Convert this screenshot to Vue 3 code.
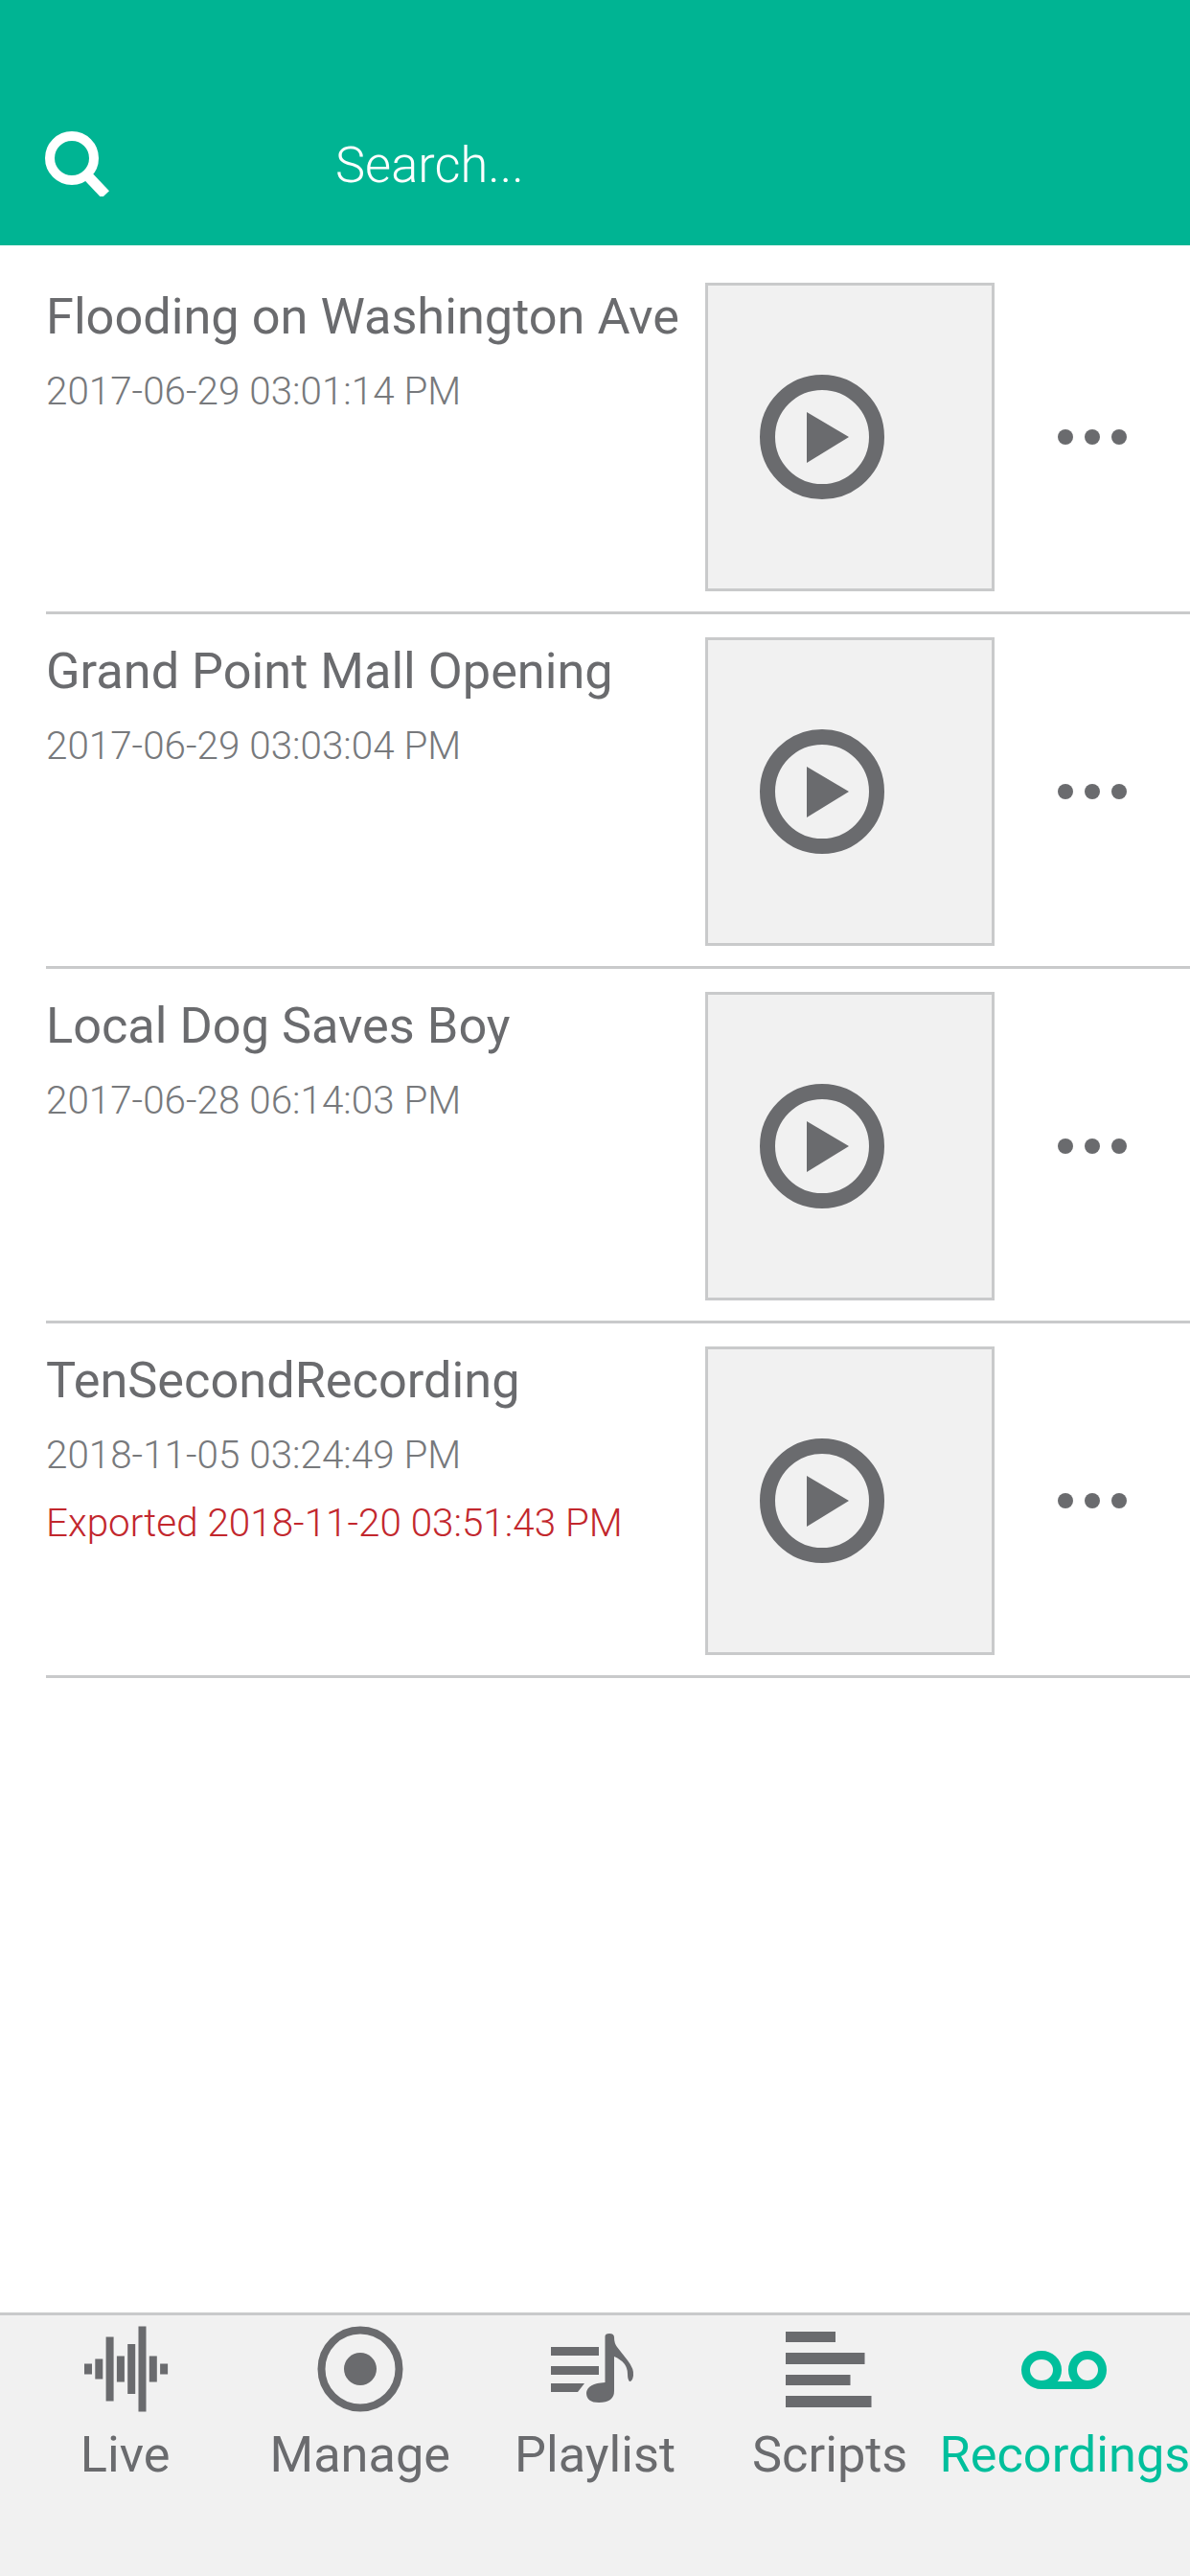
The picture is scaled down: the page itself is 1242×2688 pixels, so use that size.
<template>
  <div class="page">
    <header class="search-bar">
      <svg class="search-icon" width="70" height="68" viewBox="0 0 70 68">
        <circle cx="29" cy="28" r="23" fill="none" stroke="#fff" stroke-width="10" />
        <path d="M46 47 L64 66" fill="none" stroke="#fff" stroke-width="11" />
      </svg>
      <span class="search-text">Search...</span>
    </header>

    <main class="list">
      <div class="row" v-for="rec in recordings" :key="rec.title">
        <div class="info">
          <div class="title">{{ rec.title }}</div>
          <div class="date">{{ rec.date }}</div>
          <div class="exported" v-if="rec.exported">Exported {{ rec.exported }}</div>
        </div>
        <div class="thumb">
          <svg width="130" height="130" viewBox="0 0 130 130">
            <circle cx="65" cy="65" r="57" fill="none" stroke="#6a6b6e" stroke-width="16" />
            <path d="M49 39 L93 65 L49 92 Z" fill="#6a6b6e" />
          </svg>
        </div>
        <div class="more">
          <span class="dot"></span>
          <span class="dot"></span>
          <span class="dot"></span>
        </div>
      </div>
    </main>

    <nav class="tabs">
      <div class="tab" v-for="tab in tabs" :key="tab.id" :class="{ active: tab.id === 'recordings' }">
        <svg class="tab-icon" width="100" height="90" viewBox="0 0 100 90">
          <g v-if="tab.id === 'live'" fill="#6a6b6e">
            <rect v-for="(h, i) in liveBars" :key="i" :x="7 + i * 11.3" :y="45 - h / 2" width="8" :height="h" />
          </g>
          <g v-else-if="tab.id === 'manage'">
            <circle cx="50" cy="45" r="40.5" fill="none" stroke="#6a6b6e" stroke-width="8" />
            <circle cx="50" cy="45" r="17" fill="#6a6b6e" />
          </g>
          <g v-else-if="tab.id === 'playlist'" fill="#6a6b6e">
            <rect x="4" y="22" width="50" height="9" />
            <rect x="4" y="42" width="50" height="9" />
            <path d="M4 60 H39 L32 69 H4 Z" />
            <path d="M60.5 11 Q60.5 8 65 8 Q70 8 70 12 Q70 18 73 22 L84 36 Q91 45 90 52 Q89 58 86 58 Q84 56 84 50 Q84 38 70 32 V68 Q70 80 54 80 Q41 80 41 70 Q42 60 60.5 59 Z" />
          </g>
          <g v-else-if="tab.id === 'scripts'" fill="#6a6b6e">
            <rect x="4" y="6" width="52" height="11" />
            <rect x="4" y="28" width="82.5" height="12" />
            <rect x="4" y="51" width="67.5" height="11" />
            <rect x="4" y="73" width="89.5" height="12" />
          </g>
          <g v-else fill="none" stroke="#00bf9c" stroke-width="9">
            <ellipse cx="26" cy="46" rx="16.5" ry="15.5" />
            <ellipse cx="74" cy="46" rx="15.5" ry="15.5" />
            <path d="M26 62 H74" stroke-width="8" />
          </g>
        </svg>
        <span class="tab-label">{{ tab.label }}</span>
      </div>
    </nav>
  </div>
</template>

<script setup>
const recordings = [
  { title: 'Flooding on Washington Ave', date: '2017-06-29 03:01:14 PM' },
  { title: 'Grand Point Mall Opening', date: '2017-06-29 03:03:04 PM' },
  { title: 'Local Dog Saves Boy', date: '2017-06-28 06:14:03 PM' },
  { title: 'TenSecondRecording', date: '2018-11-05 03:24:49 PM', exported: '2018-11-20 03:51:43 PM' }
]

const tabs = [
  { id: 'live', label: 'Live' },
  { id: 'manage', label: 'Manage' },
  { id: 'playlist', label: 'Playlist' },
  { id: 'scripts', label: 'Scripts' },
  { id: 'recordings', label: 'Recordings' }
]

const liveBars = [11, 21, 67, 27, 52, 89, 27, 11]
</script>

<style>
body {
  background: #fff;
}
</style>

<style scoped>
.page {
  width: 1242px;
  height: 2688px;
  display: flex;
  flex-direction: column;
  font-family: Roboto, "Liberation Sans", sans-serif;
  background: #fff;
  overflow: hidden;
}

.search-bar {
  height: 256px;
  box-sizing: border-box;
  padding: 137px 0 0 46px;
  display: flex;
  align-items: flex-start;
  background: #00b493;
  color: #fff;
}

.search-text {
  margin: 1px 0 0 234px;
  font-size: 52.4px;
  line-height: 68px;
  font-weight: 300;
}

.list {
  flex: 1;
  padding: 15px 0 0 48px;
}

.row {
  height: 370px;
  box-sizing: border-box;
  display: flex;
  border-bottom: 3px solid #c9cacb;
}

.info {
  width: 688px;
  padding-top: 29px;
  box-sizing: border-box;
}

.title {
  font-size: 52.3px;
  line-height: 60px;
  color: #6a6b6e;
}

.date,
.exported {
  font-size: 40.4px;
  line-height: 48px;
  font-weight: 300;
  color: #77797c;
}

.date {
  margin-top: 25px;
}

.exported {
  margin-top: 23px;
  color: #c2272d;
}

.thumb {
  width: 302px;
  height: 322px;
  margin-top: 24px;
  box-sizing: border-box;
  padding: 0 0 0 54px;
  display: flex;
  align-items: center;
  background: #f1f1f1;
  border: 3px solid #c9cacb;
}

.more {
  flex: 1;
  height: 322px;
  margin-top: 24px;
  display: flex;
  align-items: center;
  justify-content: center;
  gap: 12px;
}

.dot {
  width: 16px;
  height: 16px;
  border-radius: 50%;
  background: #6a6b6e;
}

.tabs {
  height: 275px;
  box-sizing: border-box;
  padding: 11px 8px 0;
  display: grid;
  grid-template-columns: repeat(5, minmax(0, 1fr));
  align-items: start;
  background: #f1f1f1;
  border-top: 3px solid #c9cacb;
}

.tab {
  display: flex;
  flex-direction: column;
  align-items: center;
  color: #6a6b6e;
}

.tab.active {
  color: #00bf9c;
}

.tab-icon {
  display: block;
}

.tab-label {
  margin-top: 14px;
  font-size: 52.3px;
  line-height: 60px;
  white-space: nowrap;
}
</style>
